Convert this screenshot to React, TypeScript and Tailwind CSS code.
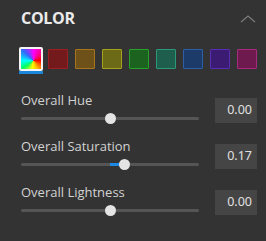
import React from "react";

const swatches = [
  { fill: "#741a1c", border: "#9c1f22" },
  { fill: "#6e5019", border: "#a8741f" },
  { fill: "#6c6a17", border: "#a6a21d" },
  { fill: "#1b631f", border: "#27a32c" },
  { fill: "#1d5e4c", border: "#2c9878" },
  { fill: "#1d3b68", border: "#2c5ea8" },
  { fill: "#3b1c72", border: "#5a2bb4" },
  { fill: "#6e1a4f", border: "#a82a7c" },
];

function Slider({ value }: { value: number }) {
  const center = 89;
  const thumbCenter = center + value * 83.5;
  const fillLeft = Math.min(center, thumbCenter);
  const fillWidth = Math.abs(thumbCenter - center);
  return (
    <div className="relative mt-[4px] h-[11px] w-[178px]">
      <div className="absolute left-0 right-0 top-[4px] h-[3px] rounded-full bg-[#555555]" />
      {fillWidth > 0 && (
        <div
          className="absolute top-[4px] h-[3px] bg-[#1e88e5]"
          style={{ left: fillLeft, width: fillWidth }}
        />
      )}
      <div
        className="absolute top-0 h-[11px] w-[11px] rounded-full bg-[#e4e4e4]"
        style={{ left: thumbCenter - 5.5 }}
      />
    </div>
  );
}

function Row({ label, value, num }: { label: string; value: string; num: number }) {
  return (
    <div className="flex h-[46px] items-start">
      <div className="ml-[21px] flex w-[178px] flex-col">
        <div className="h-[18px] text-[13px] leading-[18px] text-[#d2d2d2]">{label}</div>
        <Slider value={num} />
      </div>
      <div
        className="ml-[16px] mt-[7px] flex h-[25px] w-[42px] items-center justify-end bg-[#454545] pr-[5px] text-[12.5px] text-[#e0e0e0]"
        style={{ fontFamily: '"Noto Sans", sans-serif' }}
      >
        {value}
      </div>
    </div>
  );
}

export default function App() {
  return (
    <div
      className="h-[241px] w-[266px] overflow-hidden bg-[#333333]"
      style={{ fontFamily: '"Open Sans", "Noto Sans", sans-serif' }}
    >
      <div className="mt-[7px] flex h-[22px] items-center justify-between pl-[21px] pr-[10px]">
        <span className="text-[16px] font-bold leading-[22px] tracking-[-0.3px] text-[#ebebeb]">COLOR</span>
        <svg width="16" height="8" viewBox="0 0 16 8" className="mt-[1px]">
          <path d="M1 7 L8 1 L15 7" fill="none" stroke="#7a7a7a" strokeWidth="1.3" />
        </svg>
      </div>
      <div className="mt-[18px] flex gap-[3px] pl-[19px]">
        <div className="flex flex-col">
          <div
            className="h-[24px] w-[24px] rounded-[2px] border-2 border-[#f4f4f4]"
            style={{
              background:
                "conic-gradient(from 0deg at 62% 58%, #ff00ff, #ff0000 90deg, #ffcc00 160deg, #ffff00 190deg, #00ff66 235deg, #00ffff 270deg, #3366ff 315deg, #ff00ff 360deg)",
            }}
          />
          <div className="h-[3px] w-[24px] bg-[#1a86da]" />
        </div>
        {swatches.map((s, i) => (
          <div key={i} className="flex h-[24px] w-[24px] items-center justify-center">
            <div
              className="h-[20px] w-[20px] rounded-[1px] border"
              style={{ backgroundColor: s.fill, borderColor: s.border }}
            />
          </div>
        ))}
      </div>
      <div className="mt-[17px]">
        <Row label="Overall Hue" value="0.00" num={0} />
        <Row label="Overall Saturation" value="0.17" num={0.17} />
        <Row label="Overall Lightness" value="0.00" num={0} />
      </div>
    </div>
  );
}
